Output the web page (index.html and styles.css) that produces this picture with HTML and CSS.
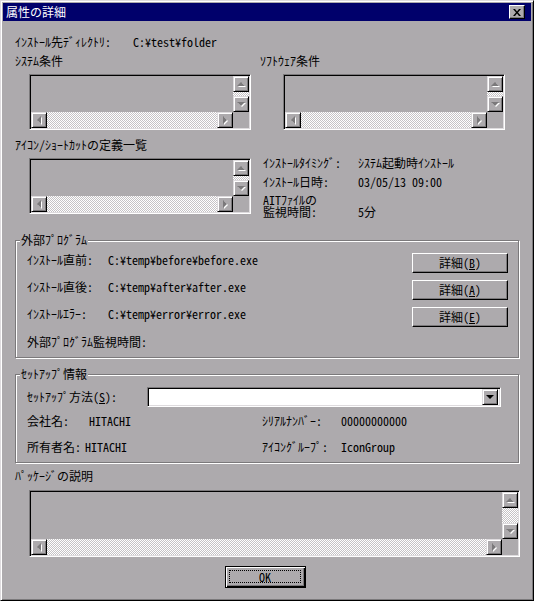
FILE: index.html
```html
<!DOCTYPE html>
<html lang="ja">
<head>
    <meta charset="UTF-8">
    <title>属性の詳細</title>
    <link rel="stylesheet" href="styles.css">
</head>
<body>
<div class="window">
    <div class="titlebar">
        <span class="title">属性の詳細</span>
        <span class="close-btn">
            <svg width="8" height="7" viewBox="0 0 8 7"><path d="M0 0h2l2 2.5L6 0h2L5 3.5 8 7H6L4 4.5 2 7H0l3-3.5z" fill="#000"/></svg>
        </span>
    </div>

    <div class="content">
        <div class="dir-line">
            <span class="dir-label">ｲﾝｽﾄｰﾙ先ﾃﾞｨﾚｸﾄﾘ:</span>
            <span>C:¥test¥folder</span>
        </div>

        <div class="cols conditions">
            <div class="col">
                <div class="caption">ｼｽﾃﾑ条件</div>
                <div class="listbox">
                    <div class="lb-area"></div>
                    <div class="vscroll"><span class="sbtn up"></span><span class="track"></span><span class="sbtn down"></span></div>
                    <div class="hscroll"><span class="sbtn left"></span><span class="track"></span><span class="sbtn right"></span></div>
                    <div class="corner"></div>
                </div>
            </div>
            <div class="col">
                <div class="caption">ｿﾌﾄｳｪｱ条件</div>
                <div class="listbox listbox-right">
                    <div class="lb-area"></div>
                    <div class="vscroll"><span class="sbtn up"></span><span class="track"></span><span class="sbtn down"></span></div>
                    <div class="hscroll"><span class="sbtn left"></span><span class="track"></span><span class="sbtn right"></span></div>
                    <div class="corner"></div>
                </div>
            </div>
        </div>

        <div class="cols icons">
            <div class="col">
                <div class="caption">ｱｲｺﾝ/ｼｮｰﾄｶｯﾄの定義一覧</div>
                <div class="listbox">
                    <div class="lb-area"></div>
                    <div class="vscroll"><span class="sbtn up"></span><span class="track"></span><span class="sbtn down"></span></div>
                    <div class="hscroll"><span class="sbtn left"></span><span class="track"></span><span class="sbtn right"></span></div>
                    <div class="corner"></div>
                </div>
            </div>
            <div class="info">
                <span>ｲﾝｽﾄｰﾙﾀｲﾐﾝｸﾞ:</span><span>ｼｽﾃﾑ起動時ｲﾝｽﾄｰﾙ</span>
                <span class="info-gap">ｲﾝｽﾄｰﾙ日時:</span><span class="info-gap">03/05/13 09:00</span>
                <span class="info-two">AITﾌｧｲﾙの<br>監視時間:</span><span class="info-two info-end">5分</span>
            </div>
        </div>

        <div class="group group-ext">
            <span class="group-title">外部ﾌﾟﾛｸﾞﾗﾑ</span>
            <div class="ext-row">
                <span>ｲﾝｽﾄｰﾙ直前:</span><span>C:¥temp¥before¥before.exe</span>
                <button class="btn">詳細(<u>B</u>)</button>
            </div>
            <div class="ext-row">
                <span>ｲﾝｽﾄｰﾙ直後:</span><span>C:¥temp¥after¥after.exe</span>
                <button class="btn">詳細(<u>A</u>)</button>
            </div>
            <div class="ext-row">
                <span>ｲﾝｽﾄｰﾙｴﾗｰ:</span><span>C:¥temp¥error¥error.exe</span>
                <button class="btn">詳細(<u>E</u>)</button>
            </div>
            <div class="ext-last">外部ﾌﾟﾛｸﾞﾗﾑ監視時間:</div>
        </div>

        <div class="group group-setup">
            <span class="group-title">ｾｯﾄｱｯﾌﾟ情報</span>
            <div class="setup-row">
                <span>ｾｯﾄｱｯﾌﾟ方法(<u>S</u>):</span>
                <div class="combo"><span class="combo-btn"></span></div>
            </div>
            <div class="pair-row pair-first">
                <div class="pair"><span class="k k-company">会社名:</span><span>HITACHI</span></div>
                <div class="pair"><span class="k k-right">ｼﾘｱﾙﾅﾝﾊﾞｰ:</span><span>00000000000</span></div>
            </div>
            <div class="pair-row pair-second">
                <div class="pair"><span class="k k-owner">所有者名:</span><span>HITACHI</span></div>
                <div class="pair"><span class="k k-right">ｱｲｺﾝｸﾞﾙｰﾌﾟ:</span><span>IconGroup</span></div>
            </div>
        </div>

        <div class="caption package-caption">ﾊﾟｯｹｰｼﾞの説明</div>
        <div class="listbox listbox-wide">
            <div class="lb-area"></div>
            <div class="vscroll"><span class="sbtn up"></span><span class="track"></span><span class="sbtn down"></span></div>
            <div class="hscroll"><span class="sbtn left"></span><span class="track"></span><span class="sbtn right"></span></div>
            <div class="corner"></div>
        </div>

        <button class="btn btn-ok"><span class="focus">OK</span></button>
    </div>
</div>
</body>
</html>
```

FILE: styles.css
```css
* {
    margin: 0;
    padding: 0;
    box-sizing: border-box;
}

body {
    font-family: "Noto Sans Mono CJK JP", "Noto Sans CJK JP", monospace;
    font-size: 12px;
    line-height: 14px;
    color: #000;
    background: #adaaad;
}

.window {
    width: 534px;
    height: 601px;
    background: #adaaad;
    border: 1px solid;
    border-color: #dedbde #000 #000 #dedbde;
    box-shadow: inset 1px 1px #fff, inset -1px -1px #7b797b;
    padding: 2px;
}

/* title bar */
.titlebar {
    height: 18px;
    background: #00006b;
    color: #fff;
    display: flex;
    align-items: center;
    justify-content: space-between;
    padding: 0 6px 0 3px;
}

.close-btn {
    width: 16px;
    height: 14px;
    background: #adaaad;
    border: 1px solid;
    border-color: #fff #000 #000 #fff;
    box-shadow: inset -1px -1px #7b797b;
    display: flex;
    align-items: center;
    justify-content: center;
}

.content {
    padding: 0 12px;
}

.dir-line {
    margin-top: 14px;
    display: flex;
}

.dir-label {
    width: 118px;
}

.cols {
    display: grid;
    grid-template-columns: 245px 1fr;
}

.conditions {
    margin-top: 5px;
}

.icons {
    margin-top: 8px;
    height: 76px;
    align-items: start;
}

.caption {
    height: 14px;
}

/* list boxes */
.listbox {
    width: 222px;
    height: 56px;
    margin: 6px 0 0 14px;
    border: 1px solid;
    border-color: #7b797b #fff #fff #7b797b;
    box-shadow: inset 1px 1px #000, inset -1px -1px #dedbde;
    padding: 1px;
    display: grid;
    grid-template-columns: 1fr 16px;
    grid-template-rows: 1fr 16px;
}

.listbox-right {
    margin-left: 23px;
}

.listbox-wide {
    width: 491px;
    height: 67px;
    margin-top: 7px;
}

.vscroll {
    display: flex;
    flex-direction: column;
}

.hscroll {
    display: flex;
}

.track {
    flex: 1;
    background: repeating-conic-gradient(#c6c3c6 0 25%, #fff 0 50%) 0 0 / 2px 2px;
}

.sbtn {
    width: 16px;
    height: 16px;
    flex: none;
    background: #adaaad;
    border: 1px solid;
    border-color: #dedbde #000 #000 #dedbde;
    box-shadow: inset 1px 1px #fff, inset -1px -1px #7b797b;
    display: flex;
    align-items: center;
    justify-content: center;
}

.sbtn::before {
    content: "";
    width: 0;
    height: 0;
    filter: drop-shadow(1px 1px 0 #fff);
}

.sbtn.up::before {
    border-left: 4px solid transparent;
    border-right: 4px solid transparent;
    border-bottom: 4px solid #7b797b;
}

.sbtn.down::before {
    border-left: 4px solid transparent;
    border-right: 4px solid transparent;
    border-top: 4px solid #7b797b;
}

.sbtn.left::before {
    border-top: 4px solid transparent;
    border-bottom: 4px solid transparent;
    border-right: 4px solid #7b797b;
}

.sbtn.right::before {
    border-top: 4px solid transparent;
    border-bottom: 4px solid transparent;
    border-left: 4px solid #7b797b;
}

/* info column */
.info {
    margin-top: 18px;
    padding-left: 3px;
    display: grid;
    grid-template-columns: 95px 1fr;
}

.info-gap {
    margin-top: 5px;
}

.info-two {
    margin-top: 5px;
    line-height: 12px;
}

.info-end {
    align-self: end;
}

/* group boxes */
.group {
    position: relative;
    border: 1px solid #7b797b;
    box-shadow: inset 1px 1px #fff, 1px 1px #fff;
    padding: 12px 10px 8px 11px;
}

.group-title {
    position: absolute;
    top: -8px;
    left: 4px;
    padding: 0 1px;
    background: #adaaad;
}

.group-ext {
    margin-top: 26px;
    height: 118px;
    display: flex;
    flex-direction: column;
    gap: 7px;
}

.ext-row {
    display: grid;
    grid-template-columns: 81px 1fr 96px;
    height: 20px;
}

.ext-last {
    margin-top: 1px;
}

.btn {
    font: inherit;
    color: #000;
    width: 96px;
    height: 20px;
    background: #adaaad;
    border: 1px solid;
    border-color: #fff #000 #000 #fff;
    box-shadow: inset -1px -1px #7b797b;
    display: flex;
    align-items: center;
    justify-content: center;
}

.group-setup {
    margin-top: 16px;
    height: 89px;
}

.setup-row {
    display: grid;
    grid-template-columns: 120px 354px;
    align-items: center;
}

.combo {
    height: 20px;
    background: #fff;
    border: 1px solid;
    border-color: #7b797b #fff #fff #7b797b;
    box-shadow: inset 1px 1px #000, inset -1px -1px #dedbde;
    padding: 1px 2px 1px 1px;
    display: flex;
    justify-content: flex-end;
}

.combo-btn {
    width: 16px;
    height: 16px;
    background: #adaaad;
    border: 1px solid;
    border-color: #dedbde #000 #000 #dedbde;
    box-shadow: inset 1px 1px #fff, inset -1px -1px #7b797b;
    display: flex;
    align-items: center;
    justify-content: center;
}

.combo-btn::before {
    content: "";
    border-left: 4px solid transparent;
    border-right: 4px solid transparent;
    border-top: 4px solid #000;
}

.pair-row {
    display: grid;
    grid-template-columns: 235px 1fr;
}

.pair-first {
    margin-top: 7px;
}

.pair-second {
    margin-top: 12px;
}

.pair {
    display: flex;
}

.k {
    flex: none;
}

.k-company {
    width: 62px;
}

.k-owner {
    width: 58px;
}

.k-right {
    width: 79px;
}

.package-caption {
    margin-top: 6px;
}

.btn-ok {
    width: 81px;
    height: 22px;
    margin: 9px 0 0 210px;
    border: 1px solid #000;
    box-shadow: inset 1px 1px #fff, inset -1px -1px #000, inset -2px -2px #7b797b;
    padding: 3px 4px 4px 3px;
}

.focus {
    width: 100%;
    height: 100%;
    border: 1px dotted #000;
    display: flex;
    align-items: center;
    justify-content: center;
}
```
